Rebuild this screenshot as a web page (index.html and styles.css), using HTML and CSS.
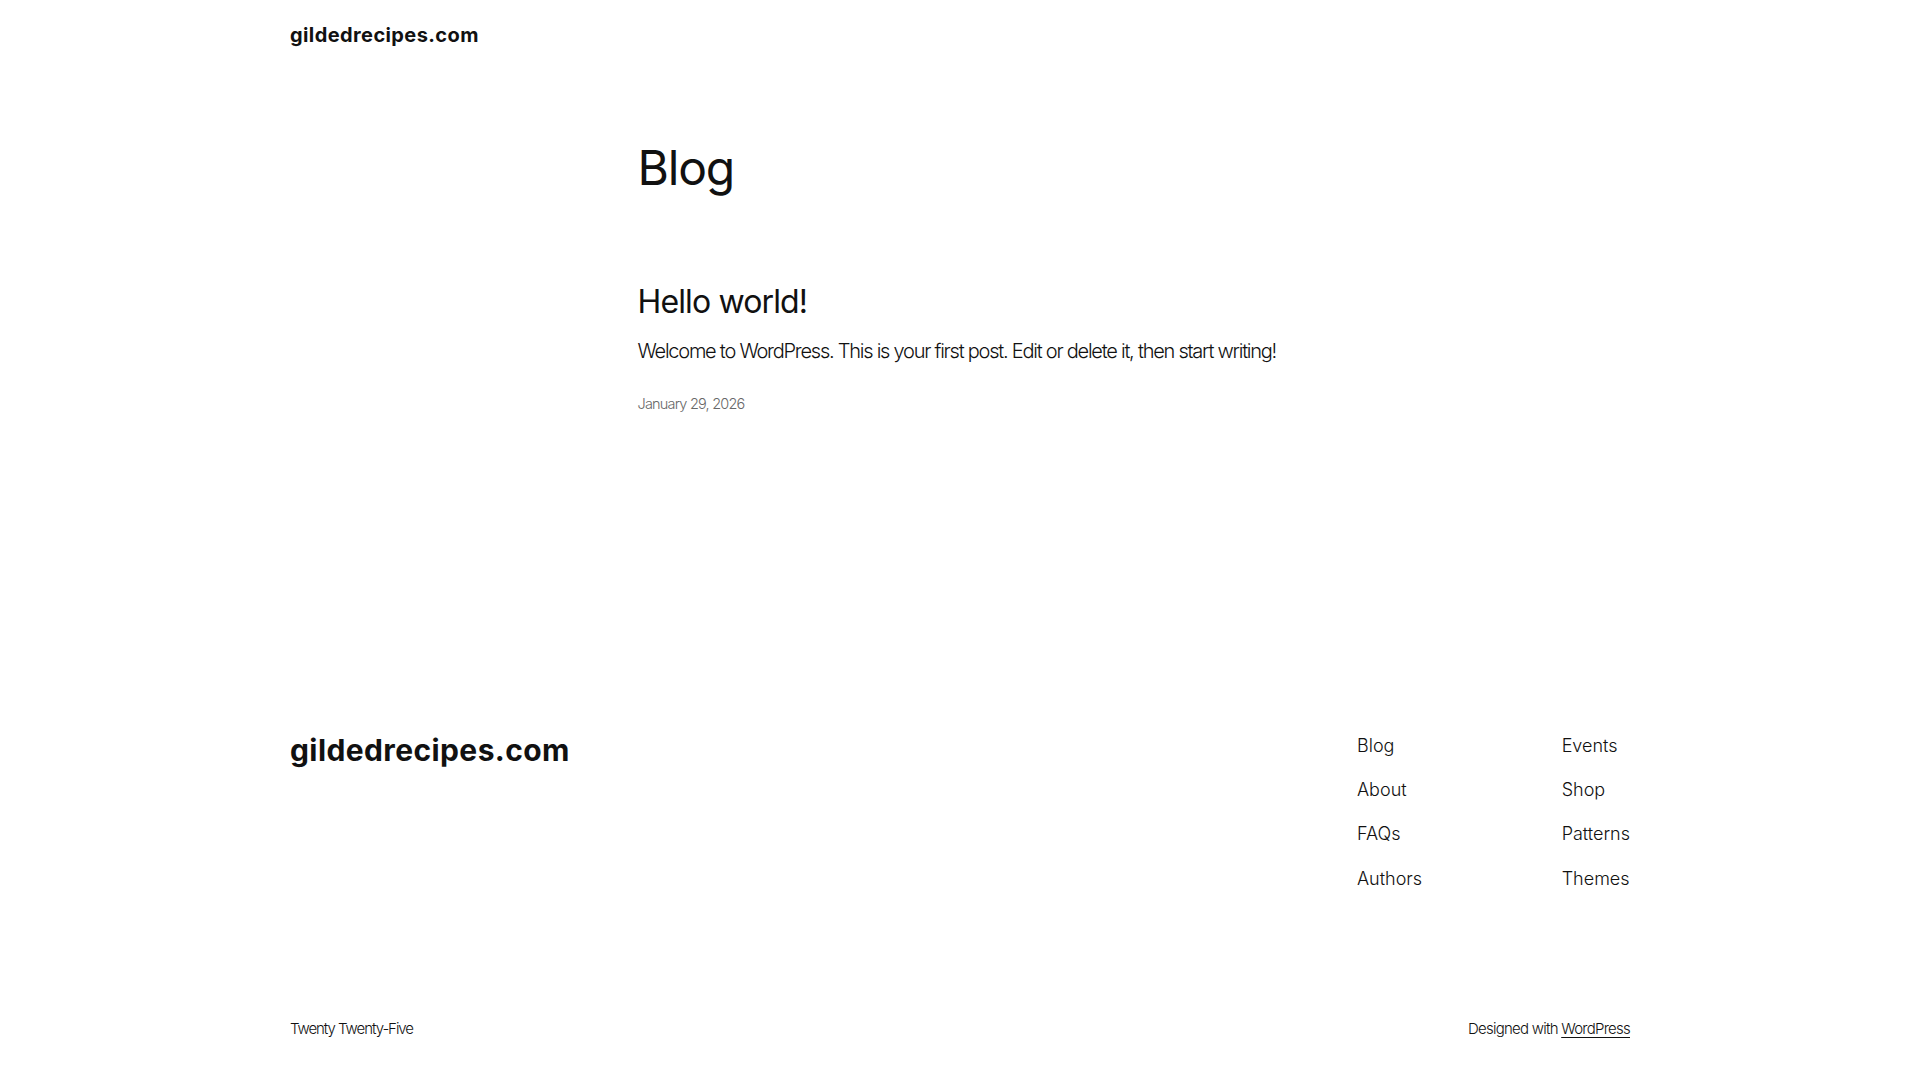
FILE: index.html
```html
<!DOCTYPE html>
<html lang="en">
<head>
<meta charset="utf-8">
<title>Blog – gildedrecipes.com</title>
<link rel="stylesheet" href="styles.css">
</head>
<body>
<header class="site-header">
  <div class="wide">
    <a class="site-title" href="#">gildedrecipes.com</a>
  </div>
</header>
<main class="content">
  <h1 class="page-title">Blog</h1>
  <article class="post">
    <h2 class="post-title">Hello world!</h2>
    <p class="excerpt">Welcome to WordPress. This is your first post. Edit or delete it, then start writing!</p>
    <div class="post-date">January 29, 2026</div>
  </article>
</main>
<footer class="site-footer">
  <div class="wide footer-top">
    <a class="footer-title" href="#">gildedrecipes.com</a>
    <nav class="footer-nav">
      <ul class="nav-col">
        <li><a href="#">Blog</a></li>
        <li><a href="#">About</a></li>
        <li><a href="#">FAQs</a></li>
        <li><a href="#">Authors</a></li>
      </ul>
      <ul class="nav-col">
        <li><a href="#">Events</a></li>
        <li><a href="#">Shop</a></li>
        <li><a href="#">Patterns</a></li>
        <li><a href="#">Themes</a></li>
      </ul>
    </nav>
  </div>
  <div class="wide footer-bottom">
    <span class="credit credit-theme">Twenty Twenty-Five</span>
    <span class="credit">Designed with <a class="credit-link" href="#">WordPress</a></span>
  </div>
</footer>
</body>
</html>
```

FILE: styles.css
```css
* { box-sizing: border-box; }

html, body {
  margin: 0;
  padding: 0;
  background: #ffffff;
}

body {
  font-family: Inter, "Noto Sans", "Liberation Sans", sans-serif;
  color: #111111;
  font-weight: 300;
}

a { color: inherit; text-decoration: none; }

.wide {
  width: 1340px;
  margin: 0 auto;
}

/* Header */
.site-header {
  padding-top: 21px;
}

.site-title {
  display: block;
  font-size: 20px;
  line-height: 28px;
  font-weight: 700;
  letter-spacing: 0.4px;
}

/* Main content */
.content {
  width: 645px;
  margin: 0 auto;
}

.page-title {
  margin: 92px 0 0;
  font-size: 48px;
  line-height: 54px;
  font-weight: 400;
  letter-spacing: -0.025em;
}

.post-title {
  margin: 89px 0 0;
  font-size: 32px;
  line-height: 36px;
  font-weight: 400;
  letter-spacing: -0.027em;
}

.excerpt {
  margin: 17px 0 0;
  font-size: 20px;
  line-height: 28px;
  letter-spacing: -0.062em;
}

.post-date {
  margin-top: 28px;
  font-size: 14.5px;
  line-height: 21px;
  color: #686868;
  letter-spacing: -0.055em;
}

/* Footer */
.site-footer {
  margin-top: 319px;
}

.footer-top {
  display: flex;
  justify-content: space-between;
  align-items: flex-start;
}

.footer-title {
  font-size: 30px;
  line-height: 35px;
  font-weight: 700;
  letter-spacing: 0.4px;
}

.footer-nav {
  width: 273px;
  display: flex;
  justify-content: space-between;
}

.nav-col {
  list-style: none;
  margin: 0;
  padding: 0;
  display: flex;
  flex-direction: column;
  gap: 19px;
}

.nav-col li {
  font-size: 18px;
  line-height: 25.2px;
  letter-spacing: 0;
}

.footer-bottom {
  margin-top: 127px;
  padding-bottom: 40px;
  display: flex;
  justify-content: space-between;
  align-items: baseline;
}

.credit {
  font-size: 15px;
  line-height: 21px;
  letter-spacing: -0.05em;
}

.credit-theme {
  letter-spacing: -0.07em;
}

.credit-link {
  text-decoration: underline;
  text-underline-offset: 3px;
  text-decoration-thickness: 1px;
}
```
